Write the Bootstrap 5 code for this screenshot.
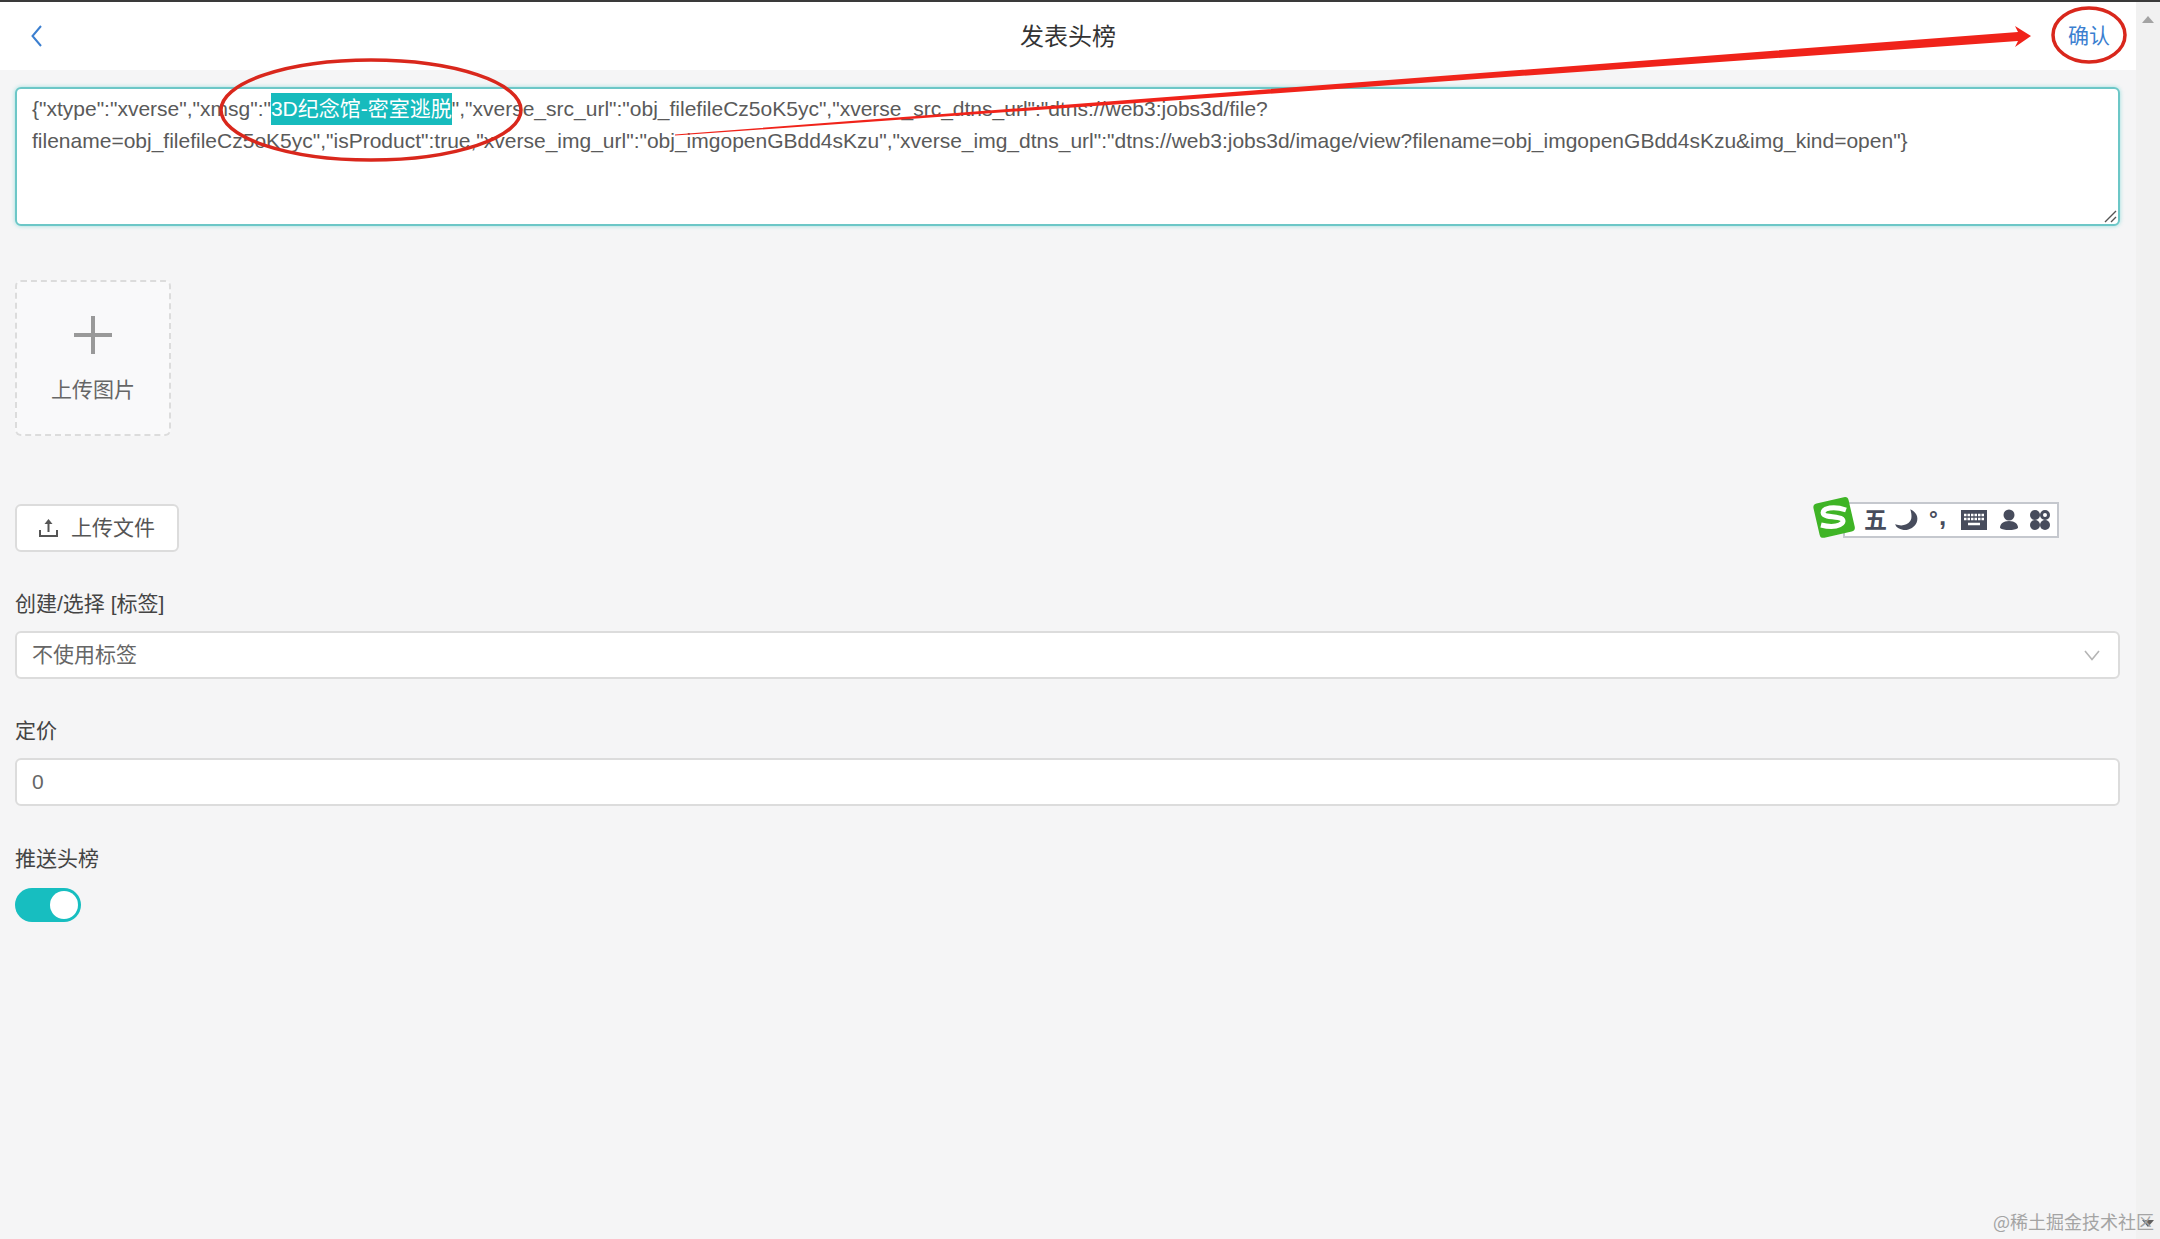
<!DOCTYPE html>
<html lang="zh-CN">
<head>
<meta charset="utf-8">
<title>发表头榜</title>
<link href="https://cdn.jsdelivr.net/npm/bootstrap@5.3.0/dist/css/bootstrap.min.css" rel="stylesheet">
<style>
html,body{height:100%;margin:0;overflow:hidden}
body{background:#f5f5f6;font-family:"Liberation Sans","Noto Sans CJK SC",sans-serif;font-size:21px;color:#555;position:relative}
.topline{height:2px;background:#3a3a3a}
.shell{height:1237px}
.mainpane{width:2136px}
.sidebar{width:24px;background:#f1f1f1;position:relative}
.sb-up,.sb-down{position:absolute;left:6px;width:0;height:0;border-left:6px solid transparent;border-right:6px solid transparent}
.sb-up{top:14px;border-bottom:7px solid #a3a3a3}
.sb-down{bottom:12px;border-top:7px solid #606060}
.headbar{height:68px;background:#fff;padding:0 25px 0 30px}
.headbar h1{font-size:24px;font-weight:400;color:#333;margin:0;position:absolute;left:0;top:1px;width:2136px;text-align:center;line-height:68px}
.confirm{color:#3b7fd0;font-size:21px;padding:0}
.formarea{padding:17px 16px 0 15px}
.jsonbox{height:139px;background:#fff;border:2px solid #6cc7c7;border-radius:6px;box-shadow:0 0 4px rgba(23,190,187,.4);padding:4px 15px;font-size:21px;line-height:32px;color:#5a5a5a;position:relative;white-space:nowrap}
.sel{background:#17bbbd;color:#fff;display:inline-block;line-height:32px}
.grip{position:absolute;right:1px;bottom:1px}
.picbox{width:156px;height:156px;margin-top:54px;background:#f9f9fa;border:2px dashed #dcdcdc;border-radius:6px;position:relative}
.plus-h,.plus-v{position:absolute;background:#999}
.plus-h{left:57px;top:51px;width:38px;height:4px}
.plus-v{left:74px;top:34px;width:4px;height:38px}
.piclabel{position:absolute;left:0;right:0;top:92px;line-height:32px;text-align:center;color:#666}
.filebtn{width:164px;height:48px;margin-top:68px;background:#fff;border:2px solid #dcdcdc;border-radius:6px;color:#555;font-size:21px;padding:0;gap:13px}
.fieldlabel{font-size:21px;line-height:32px;color:#444;margin:0}
.lbl1{margin-top:36px}
.lbl2{margin-top:36px}
.lbl3{margin-top:37px}
.fieldbox{height:48px;margin-top:11px;background:#fff;border:2px solid #dcdcdc;border-radius:6px;padding:0 15px;font-size:21px;color:#666}
.chev{margin-right:3px}
.toggle{width:66px;height:34px;margin-top:13px;background:#17bec0;border-radius:17px;position:relative}
.knob{position:absolute;right:3px;top:3px;width:28px;height:28px;border-radius:50%;background:#fff}
.overlay{position:absolute;left:0;top:0;pointer-events:none}
.imebar{position:absolute;left:1843px;top:502px;width:216px;height:36px;background:#fff;border:2px solid #c5c8ce;color:#474c5c}
.imechar{position:absolute;top:0;line-height:32px;font-weight:700;font-size:23px;color:#474c5c}
.watermark{position:absolute;right:6px;top:1208px;font-size:18px;line-height:26px;color:#a4a4a4;font-family:"Noto Sans CJK SC",sans-serif}
</style>
</head>
<body>
<div class="topline"></div>
<div class="shell d-flex">
  <div class="mainpane flex-shrink-0">
    <div class="headbar d-flex align-items-center justify-content-between position-relative">
      <svg width="14" height="24" viewBox="0 0 14 24" class="position-relative"><path d="M11 2 2.500 12 11 22" fill="none" stroke="#3b7fd0" stroke-width="2"/></svg>
      <h1>发表头榜</h1>
      <button type="button" class="btn btn-link text-decoration-none confirm position-relative">确认</button>
    </div>
    <div class="formarea">
      <div class="jsonbox">{"xtype":"xverse","xmsg":"<span class="sel">3D纪念馆-密室逃脱</span>","xverse_src_url":"obj_filefileCz5oK5yc","xverse_src_dtns_url":"dtns://web3:jobs3d/file?<br>filename=obj_filefileCz5oK5yc","isProduct":true,"xverse_img_url":"obj_imgopenGBdd4sKzu","xverse_img_dtns_url":"dtns://web3:jobs3d/image/view?filename=obj_imgopenGBdd4sKzu&amp;img_kind=open"}
        <svg class="grip" width="14" height="14" viewBox="0 0 14 14"><path d="M2 13 13 2M8 13l5-5" stroke="#555" stroke-width="1.400" fill="none"/></svg>
      </div>
      <div class="picbox">
        <span class="plus-h"></span><span class="plus-v"></span>
        <div class="piclabel">上传图片</div>
      </div>
      <button type="button" class="btn filebtn d-flex align-items-center justify-content-center">
        <svg width="19" height="18" viewBox="0 0 19 18"><path d="M1 11v6h17v-6M9.500 13V3" fill="none" stroke="#555" stroke-width="2"/><path d="M9.500 0 13.500 5h-8z" fill="#555"/></svg>
        <span>上传文件</span>
      </button>
      <p class="fieldlabel lbl1">创建/选择 [标签]</p>
      <div class="fieldbox d-flex align-items-center justify-content-between">
        <span>不使用标签</span>
        <svg class="chev" width="16" height="11" viewBox="0 0 16 11"><path d="M1 1l7 8.500L15 1" fill="none" stroke="#b5b5b5" stroke-width="1.600"/></svg>
      </div>
      <p class="fieldlabel lbl2">定价</p>
      <div class="fieldbox d-flex align-items-center"><span>0</span></div>
      <p class="fieldlabel lbl3">推送头榜</p>
      <div class="toggle"><span class="knob"></span></div>
    </div>
  </div>
  <div class="sidebar flex-grow-1"><span class="sb-up"></span><span class="sb-down"></span></div>
</div>

<svg class="overlay" width="2160" height="1239" viewBox="0 0 2160 1239">
  <ellipse cx="371" cy="110" rx="150" ry="50" fill="none" stroke="#d9271c" stroke-width="3.500"/>
  <ellipse cx="2089" cy="35" rx="36" ry="27" fill="none" stroke="#d9271c" stroke-width="3.500"/>
  <polygon points="675,134.500 2018,32 2015,26 2031,36 2015,47 2018,41 675,135.500" fill="#f0231a"/>
</svg>

<div class="imebar">
  <span class="imechar" style="left:19px">五</span>
  <svg class="position-absolute" style="left:49px;top:4px" width="26" height="24" viewBox="0 0 24 22"><path d="M15 1c5 2 8 7 6 12-2 5-8 8-13 7-3-.5-6-2-7-5 6 2 11 1 14-3 2-3 1-8 0-11z" fill="#474c5c"/></svg>
  <span class="imechar" style="left:84px;font-size:22px">°</span>
  <span class="imechar" style="left:94px;font-size:26px;top:-4px">,</span>
  <svg class="position-absolute" style="left:116px;top:6px" width="26" height="20" viewBox="0 0 26 20"><rect width="26" height="20" fill="#474c5c"/><path d="M3 5h20M3 9h20" stroke="#fff" stroke-width="2.500" stroke-dasharray="2.500 1"/><path d="M7 14h12" stroke="#fff" stroke-width="2.500"/></svg>
  <svg class="position-absolute" style="left:154px;top:5px" width="20" height="22" viewBox="0 0 20 22"><circle cx="10" cy="6" r="5.500" fill="#474c5c"/><path d="M1 19c0-4 3-7 9-7s9 3 9 7c-2 1.500-5 2-9 2s-7-.5-9-2z" fill="#474c5c"/></svg>
  <svg class="position-absolute" style="left:184px;top:5px" width="22" height="22" viewBox="0 0 22 22"><circle cx="6" cy="6" r="5" fill="#474c5c"/><circle cx="16" cy="6" r="3.500" fill="none" stroke="#474c5c" stroke-width="3"/><circle cx="6" cy="16" r="5" fill="#474c5c"/><circle cx="16" cy="16" r="5" fill="#474c5c"/></svg>
</div>
<svg class="overlay" width="2160" height="1239" viewBox="0 0 2160 1239">
  <rect x="1816" y="500" width="36" height="35" rx="4" transform="rotate(-13 1834 517)" fill="#3fb426"/>
  <path d="M1846 510c-6-2-14-3-20-1-4 2-4 6 1 7 5 1 12 1 15 3 3 3-1 6-6 7-5 1-11 0-15-1" fill="none" stroke="#fff" stroke-width="5"/>
</svg>
<div class="watermark">@稀土掘金技术社区</div>
</body>
</html>
